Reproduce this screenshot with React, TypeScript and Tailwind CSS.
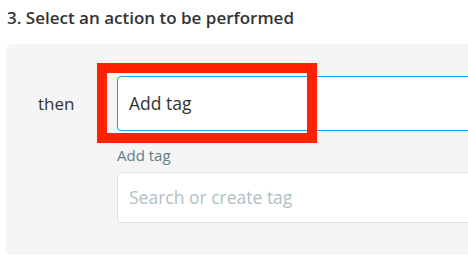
export default function App() {
  return (
    <div className="relative w-[468px] h-[268px] overflow-hidden bg-white font-['Open_Sans','Lato',sans-serif]">
      <h2 className="pl-[7px] pt-[7px] text-[17px] leading-[22px] font-semibold text-[#333]">
        3. Select an action to be performed
      </h2>

      <div className="mt-[15px] ml-[6px] w-[520px] rounded-[5px] bg-[#f5f5f5] pt-[32px] pb-[32px] pl-[32px]">
        <div className="flex">
          <div className="w-[79px] h-[55px] flex items-center text-[17px] text-[#333]">
            then
          </div>
          <div className="flex flex-col">
            <div className="w-[400px] h-[55px] flex items-center rounded-[4px] border border-[#0ea5e9] bg-white px-[11px] text-[17.5px] text-[#333]">
              Add tag
            </div>
            <label className="mt-[14px] text-[15px] leading-[20px] text-[#607d8b]">
              Add tag
            </label>
            <div className="mt-[7px] w-[400px] h-[51px] flex items-center rounded-[4px] border border-[#dde1e3] bg-white px-[11px] text-[17.5px] text-[#b0bec5]">
              Search or create tag
            </div>
          </div>
        </div>
      </div>

      <div className="absolute left-[97px] top-[63px] w-[220px] h-[80px] border-[10px] border-[#ff2200]" />
    </div>
  );
}
